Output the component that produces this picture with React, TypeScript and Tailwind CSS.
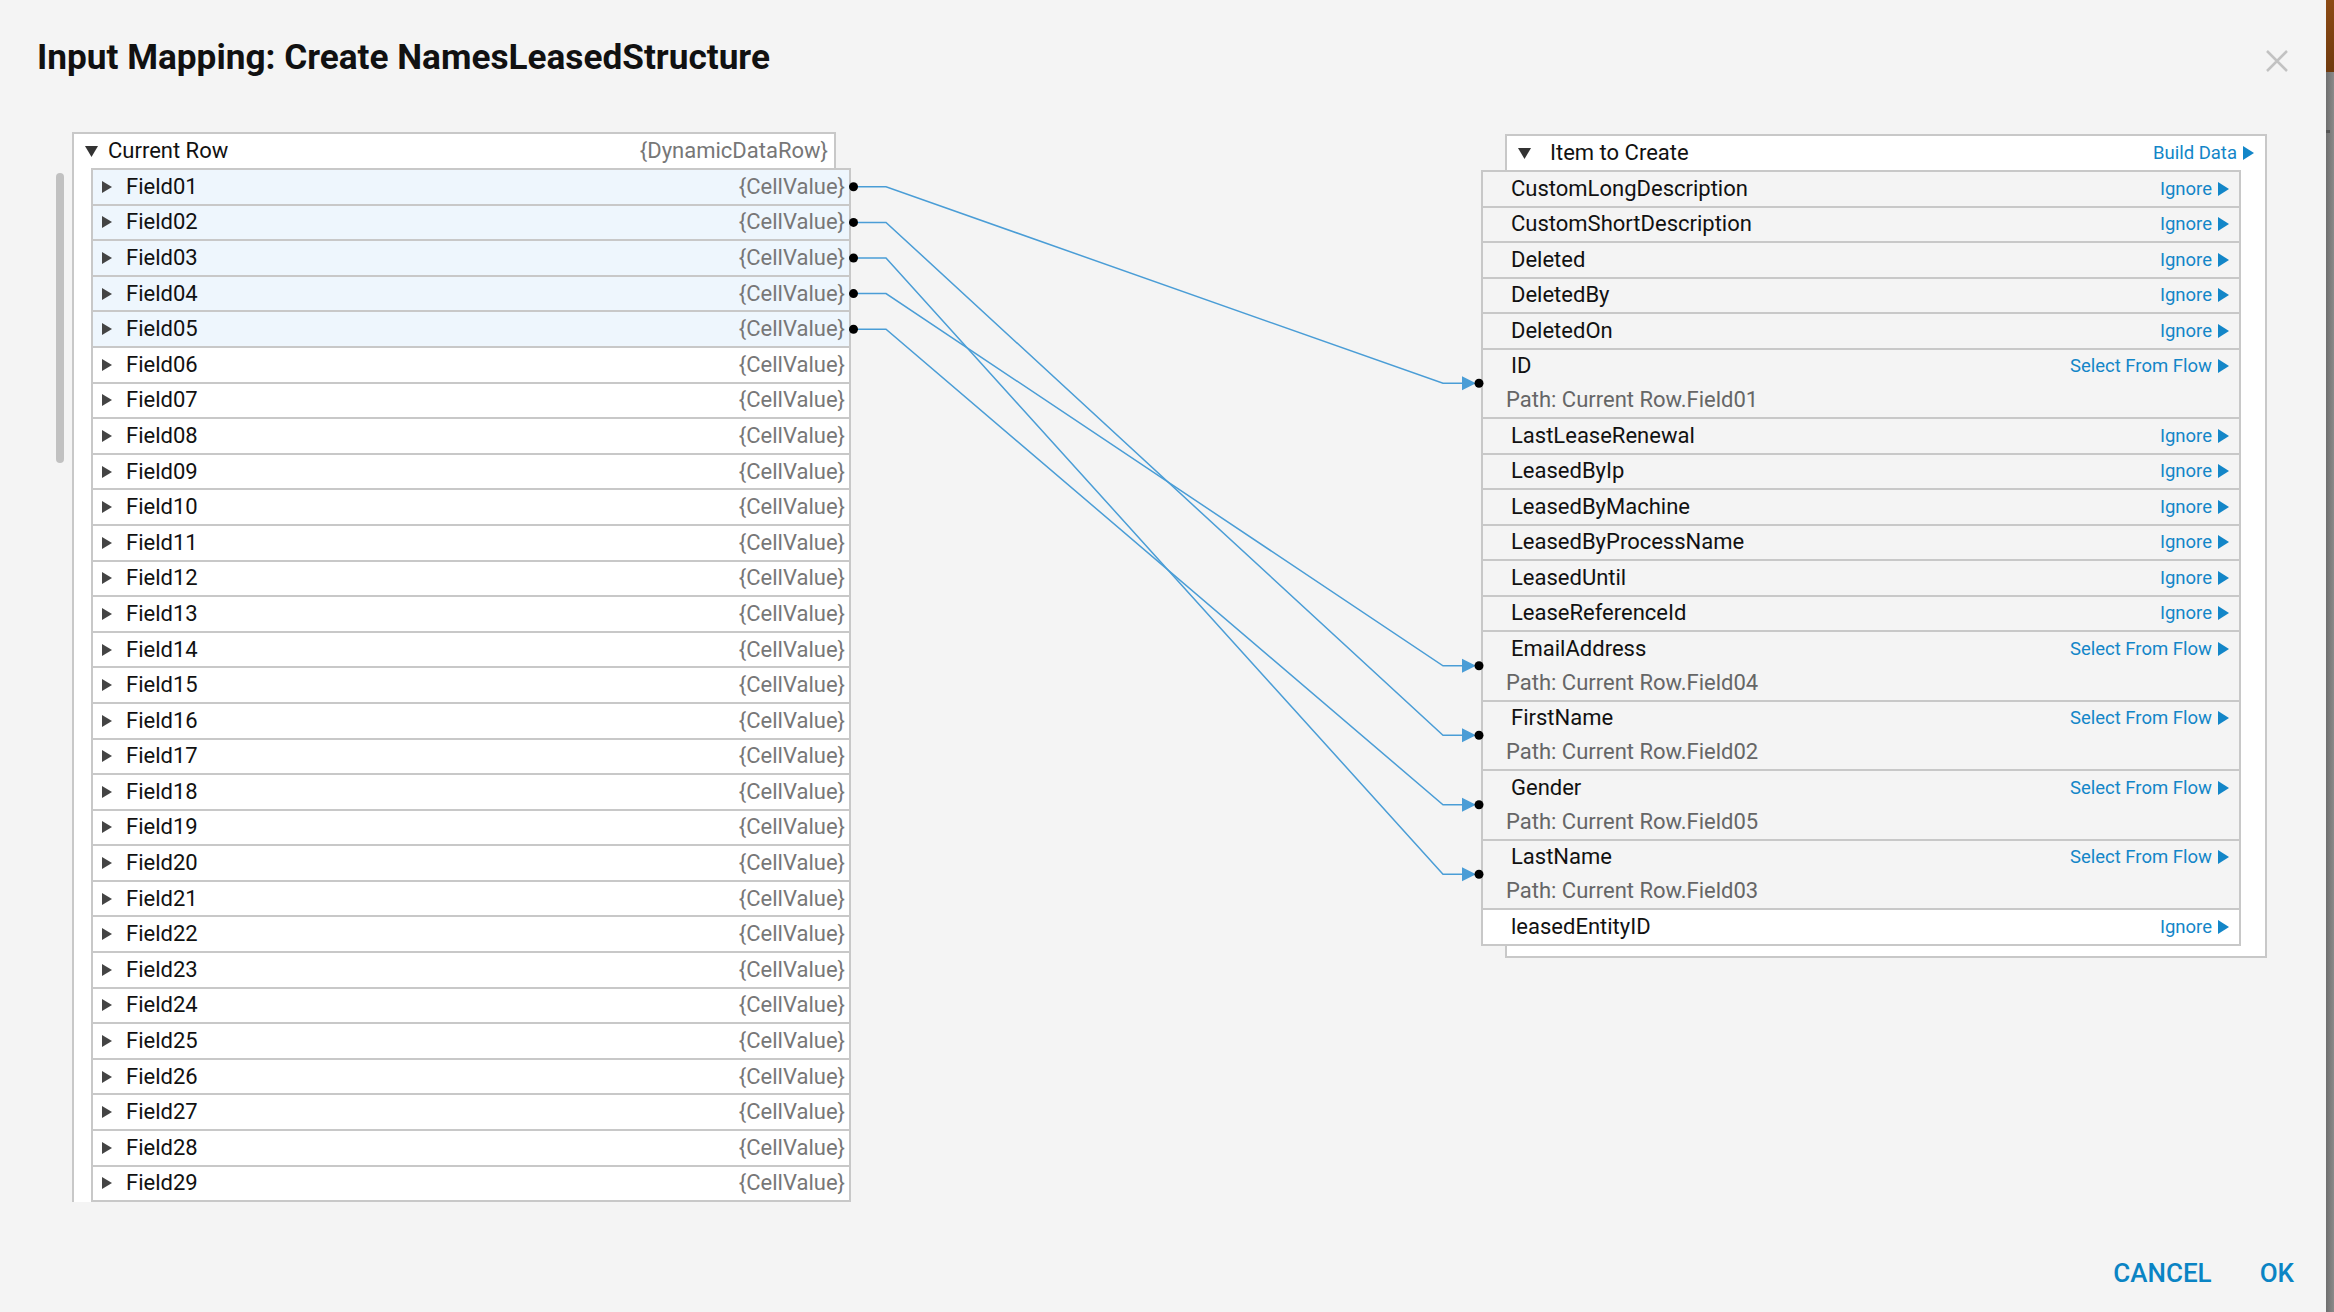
import React from "react";

const P = 35.5; // single row pitch, target tree
const PL = 35.6; // row pitch, source tree
const D = 69.5; // row with a path line

type Target = {
  name: string;
  action: "Ignore" | "Select From Flow";
  path?: string;
};

const fields = Array.from({ length: 29 }, (_, i) => `Field${String(i + 1).padStart(2, "0")}`);

const targets: Target[] = [
  { name: "CustomLongDescription", action: "Ignore" },
  { name: "CustomShortDescription", action: "Ignore" },
  { name: "Deleted", action: "Ignore" },
  { name: "DeletedBy", action: "Ignore" },
  { name: "DeletedOn", action: "Ignore" },
  { name: "ID", action: "Select From Flow", path: "Current Row.Field01" },
  { name: "LastLeaseRenewal", action: "Ignore" },
  { name: "LeasedByIp", action: "Ignore" },
  { name: "LeasedByMachine", action: "Ignore" },
  { name: "LeasedByProcessName", action: "Ignore" },
  { name: "LeasedUntil", action: "Ignore" },
  { name: "LeaseReferenceId", action: "Ignore" },
  { name: "EmailAddress", action: "Select From Flow", path: "Current Row.Field04" },
  { name: "FirstName", action: "Select From Flow", path: "Current Row.Field02" },
  { name: "Gender", action: "Select From Flow", path: "Current Row.Field05" },
  { name: "LastName", action: "Select From Flow", path: "Current Row.Field03" },
  { name: "leasedEntityID", action: "Ignore" },
];

const links = [
  { from: 0, to: "ID" },
  { from: 1, to: "FirstName" },
  { from: 2, to: "LastName" },
  { from: 3, to: "EmailAddress" },
  { from: 4, to: "Gender" },
];

// page coordinates of the connector ends
const leftY = (i: number) => 170 + PL * i + (PL - 2) / 2;
const rightY: Record<string, number> = {};
{
  let y = 172;
  for (const t of targets) {
    const h = t.path ? D : P;
    rightY[t.name] = y + (h - 2) / 2;
    y += h;
  }
}

function DownTri() {
  return (
    <svg width="13" height="11" viewBox="0 0 13 11" className="shrink-0">
      <polygon points="0,0 13,0 6.5,11" fill="#333" />
    </svg>
  );
}

function RightTri({ color = "#444", w = 10, h = 12 }: { color?: string; w?: number; h?: number }) {
  return (
    <svg width={w} height={h} viewBox={`0 0 ${w} ${h}`} className="shrink-0">
      <polygon points={`0,0 ${w},${h / 2} 0,${h}`} fill={color} />
    </svg>
  );
}

function ActionLink({ label }: { label: string }) {
  return (
    <span className="flex items-center gap-[6px] text-[18.5px] leading-none text-[#1386c8]">
      {label}
      <RightTri color="#1386c8" w={11} h={14} />
    </span>
  );
}

function SourceTree() {
  return (
    <div className="w-[764px] shrink-0 self-start border-2 border-b-0 border-[#c8c8c8] bg-white">
      <div className="flex h-[34px] items-center pl-[11px] pr-[6px]">
        <DownTri />
        <span className="ml-[10px] text-[22px] leading-none text-[#111]">Current Row</span>
        <span className="ml-auto text-[22px] leading-none text-[#777]">{"{DynamicDataRow}"}</span>
      </div>
      <div className="relative ml-[17px] w-[760px] border-t-2 border-[#c8c8c8]">
        {fields.map((f, i) => (
          <div
            key={f}
            className={`flex h-[35.6px] items-center border-x-2 border-b-2 border-[#c8c8c8] pl-[9px] pr-[4px] ${
              i < 5 ? "bg-[#eef6fd]" : "bg-white"
            }`}
          >
            <RightTri />
            <span className="ml-[14px] text-[22px] leading-none text-[#111]">{f}</span>
            <span className="ml-auto text-[22px] leading-none text-[#777]">{"{CellValue}"}</span>
          </div>
        ))}
        {/* next row, scrolled out of view */}
        <div className="h-[35.6px] border-x-2 border-b-2 border-[#c8c8c8] bg-white" />
      </div>
    </div>
  );
}

function TargetTree() {
  return (
    <div className="ml-[645px] mt-[2px] w-[762px] shrink-0 self-start border-2 border-[#c8c8c8] bg-white pb-[10px]">
      <div className="flex h-[34px] items-center pl-[11px] pr-[11px]">
        <DownTri />
        <span className="ml-[19px] text-[22px] leading-none text-[#111]">Item to Create</span>
        <span className="ml-auto">
          <ActionLink label="Build Data" />
        </span>
      </div>
      <div className="relative -ml-[26px] w-[760px] border-t-2 border-[#c8c8c8]">
        {targets.map((t, i) => (
          <div
            key={t.name}
            className={`border-x-2 border-b-2 border-[#c8c8c8] ${
              i === targets.length - 1 ? "bg-white" : "bg-[#f4f4f4]"
            }`}
          >
            <div className="flex h-[33.5px] items-center pl-[28px] pr-[10px]">
              <span className="text-[22px] leading-none text-[#111]">{t.name}</span>
              <span className="ml-auto">
                <ActionLink label={t.action} />
              </span>
            </div>
            {t.path && (
              <div className="flex h-[34px] items-center pl-[23px] text-[22px] leading-none text-[#666]">
                Path: {t.path}
              </div>
            )}
          </div>
        ))}
      </div>
    </div>
  );
}

function Connectors() {
  return (
    <svg className="pointer-events-none absolute left-0 top-0" width="2326" height="1312">
      {links.map((l) => {
        const y1 = leftY(l.from);
        const y2 = rightY[l.to];
        return (
          <g key={l.to}>
            <path
              d={`M 853 ${y1} H 886 L 1443 ${y2} H 1464`}
              fill="none"
              stroke="#4a9dd6"
              strokeWidth="1.5"
            />
            <polygon points={`1462,${y2 - 7} 1476,${y2} 1462,${y2 + 7}`} fill="#4a9dd6" />
            <circle cx="853.5" cy={y1} r="4.5" fill="#000" />
            <circle cx="1479" cy={y2} r="4.5" fill="#000" />
          </g>
        );
      })}
    </svg>
  );
}

export default function App() {
  return (
    <div className="flex h-[1312px] w-full overflow-hidden bg-[#f4f4f4] font-['Roboto','Liberation_Sans',sans-serif]">
      <div className="relative flex min-w-0 flex-1 flex-col">
        <header className="flex h-[75px] shrink-0 items-start justify-between pl-[37px] pr-[38px] pt-[37px]">
          <h1 className="text-[35.2px] font-bold leading-[40px] text-[#111]">
            Input Mapping: Create NamesLeasedStructure
          </h1>
          <button className="mt-[13px]" aria-label="Close">
            <svg width="22" height="22" viewBox="0 0 22 22">
              <path d="M1 1 L21 21 M21 1 L1 21" stroke="#c2c2c2" strokeWidth="2.5" />
            </svg>
          </button>
        </header>

        <div className="mt-[57px] flex h-[1070px] shrink-0">
          <div className="ml-[56px] flex h-full w-[804px] shrink-0 gap-[8px] overflow-hidden">
            <div className="mt-[41px] h-[290px] w-[8px] shrink-0 rounded-full bg-[#c1c1c1]" />
            <SourceTree />
          </div>
          <TargetTree />
        </div>

        <footer className="flex justify-end gap-[48px] pr-[32px] pt-[56px]">
          <button className="text-[26px] font-medium leading-[30px] text-[#0a84c4]">CANCEL</button>
          <button className="text-[26px] font-medium leading-[30px] text-[#0a84c4]">OK</button>
        </footer>

        <Connectors />
      </div>

      <div className="flex w-[8px] shrink-0 flex-col">
        <div className="h-[72px] bg-linear-to-b from-[#8c4a14] to-[#6f3a0e]" />
        <div className="flex flex-1 flex-col bg-linear-to-r from-[#6e6e6e] to-[#8a8a8a]">
          <div className="mt-[58px] h-[3px] w-[4px] bg-[#555]" />
        </div>
      </div>
    </div>
  );
}
